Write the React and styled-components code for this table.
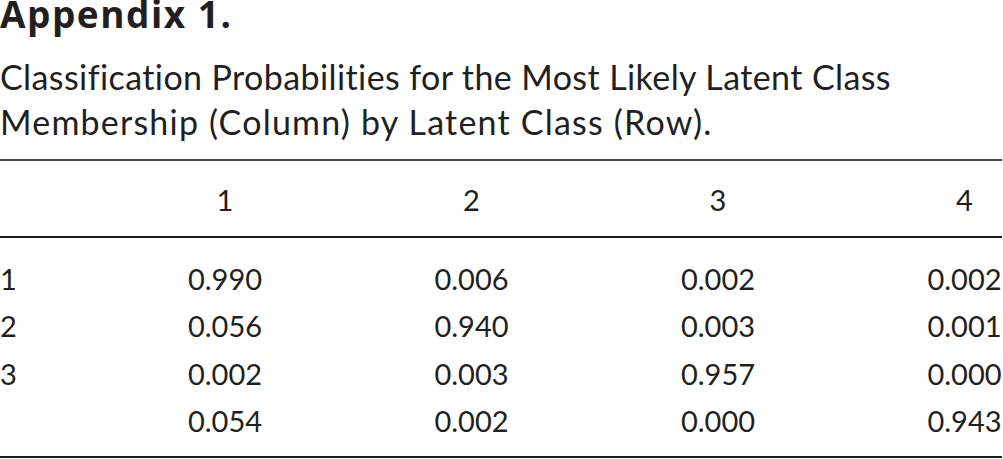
import React from "react";
import styled, { createGlobalStyle } from "styled-components";

const Global = createGlobalStyle`
  html, body { margin: 0; padding: 0; background: #ffffff; }
  body { font-family: Lato, "Open Sans", sans-serif; color: #231f20; }
`;

const Page = styled.div`
  width: 1002px;
`;

const Title = styled.h1`
  margin: 0;
  font-family: "Open Sans", Lato, sans-serif;
  font-weight: 700;
  font-size: 37px;
  line-height: 27px;
  height: 27px;
  letter-spacing: 1.5px;
  white-space: nowrap;
`;

const Caption = styled.p`
  margin: 27px 0 0 0;
  font-size: 34px;
  line-height: 45px;
  font-weight: 400;
  white-space: nowrap;
`;

const CaptionLine = styled.span`
  display: block;
  letter-spacing: ${(p) => p.$spacing}px;
`;

const Table = styled.div`
  margin-top: 15px;
  display: flex;
  flex-direction: column;
  border-top: 2px solid #4a4a4a;
  border-bottom: 2px solid #1c1c1c;
`;

const Row = styled.div`
  display: grid;
  grid-template-columns: 16px repeat(4, 75px);
  justify-content: space-between;
  font-size: 29px;
  line-height: ${(p) => (p.$head ? "34.8px" : "47.2px")};
`;

const HeadRow = styled(Row)`
  padding: 22.4px 0 17.8px 0;
  border-bottom: 2px solid #1c1c1c;
`;

const Body = styled.div`
  padding: 17.2px 0 12px 0;
`;

const Cell = styled.div`
  text-align: ${(p) => (p.$label ? "left" : "center")};
  white-space: nowrap;
`;

const headers = ["", "1", "2", "3", "4"];
const rows = [
  ["1", "0.990", "0.006", "0.002", "0.002"],
  ["2", "0.056", "0.940", "0.003", "0.001"],
  ["3", "0.002", "0.003", "0.957", "0.000"],
  ["", "0.054", "0.002", "0.000", "0.943"],
];

export default function App() {
  return (
    <Page>
      <Global />
      <Title>Appendix 1.</Title>
      <Caption>
        <CaptionLine $spacing={0.4}>
          Classification Probabilities for the Most Likely Latent Class
        </CaptionLine>
        <CaptionLine $spacing={1.2}>
          Membership (Column) by Latent Class (Row).
        </CaptionLine>
      </Caption>
      <Table>
        <HeadRow $head>
          {headers.map((h, i) => (
            <Cell key={"h" + i} $label={i === 0}>
              {h}
            </Cell>
          ))}
        </HeadRow>
        <Body>
          {rows.map((r, ri) => (
            <Row key={ri}>
              {r.map((c, ci) => (
                <Cell key={ci} $label={ci === 0}>
                  {c}
                </Cell>
              ))}
            </Row>
          ))}
        </Body>
      </Table>
    </Page>
  );
}
